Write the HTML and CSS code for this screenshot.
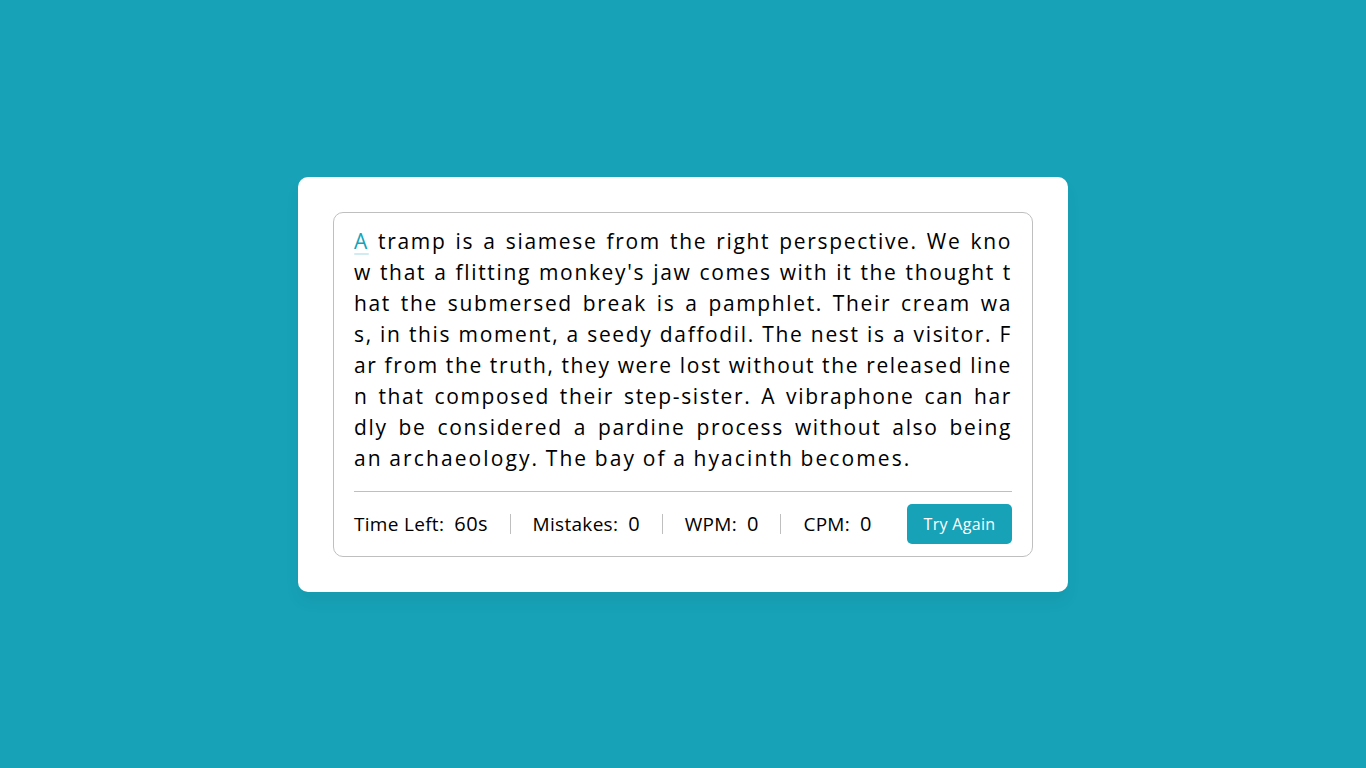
FILE: index.html
```html
<!DOCTYPE html>
<html lang="en">
<head>
<meta charset="utf-8">
<title>Typing Speed Test</title>
<link rel="stylesheet" href="styles.css">
</head>
<body>
<div class="wrapper">
  <div class="content-box">
    <div class="typing-text">
      <div class="line"><span class="active">A</span> tramp is a siamese from the right perspective. We kno</div>
      <div class="line">w that a flitting monkey's jaw comes with it the thought t</div>
      <div class="line">hat the submersed break is a pamphlet. Their cream wa</div>
      <div class="line">s, in this moment, a seedy daffodil. The nest is a visitor. F</div>
      <div class="line">ar from the truth, they were lost without the released line</div>
      <div class="line">n that composed their step-sister. A vibraphone can har</div>
      <div class="line">dly be considered a pardine process without also being</div>
      <div class="line last">an archaeology. The bay of a hyacinth becomes.</div>
    </div>
    <div class="content">
      <ul class="result-details">
        <li class="time"><p>Time Left:</p><span><b>60</b>s</span></li>
        <li class="mistake"><p>Mistakes:</p><span>0</span></li>
        <li class="wpm"><p>WPM:</p><span>0</span></li>
        <li class="cpm"><p>CPM:</p><span>0</span></li>
      </ul>
      <button class="retry">Try Again</button>
    </div>
  </div>
</div>
</body>
</html>
```
FILE: styles.css
```css
* {
  margin: 0;
  padding: 0;
  box-sizing: border-box;
}
body {
  font-family: "Open Sans", "Liberation Sans", sans-serif;
  display: flex;
  align-items: center;
  justify-content: center;
  min-height: 100vh;
  background: #17A2B8;
  color: #000;
}
.wrapper {
  width: 770px;
  padding: 35px;
  background: #fff;
  border-radius: 10px;
  box-shadow: 0 10px 15px rgba(0, 0, 0, 0.05);
}
.content-box {
  padding: 13px 20px 0;
  border-radius: 10px;
  border: 1px solid #bfbfbf;
}
.typing-text {
  font-size: 21px;
  line-height: 31px;
  letter-spacing: 1.65px;
  word-spacing: -1px;
}
.typing-text .line {
  text-align: justify;
  text-align-last: justify;
  white-space: nowrap;
}
.typing-text .line.last {
  text-align-last: left;
  letter-spacing: 2.1px;
}
.typing-text span.active {
  position: relative;
  color: #17A2B8;
}
.typing-text span.active::before {
  position: absolute;
  content: "";
  height: 2px;
  width: 100%;
  bottom: 0;
  left: 0;
  opacity: 0.2;
  border-radius: 5px;
  background: #17A2B8;
}
.content {
  margin-top: 17px;
  display: flex;
  padding: 12px 0;
  align-items: center;
  justify-content: space-between;
  border-top: 1px solid #bfbfbf;
}
.result-details {
  display: flex;
  align-items: center;
  width: calc(100% - 140px);
  justify-content: space-between;
  list-style: none;
}
.result-details li {
  display: flex;
  height: 20px;
  align-items: center;
}
.result-details li:not(:first-child) {
  padding-left: 22px;
  border-left: 1px solid #bfbfbf;
}
.result-details li p {
  font-size: 19px;
  letter-spacing: 0.3px;
}
.result-details li span {
  display: block;
  font-size: 20px;
  margin-left: 10px;
  font-weight: 500;
  letter-spacing: 0.5px;
}
.result-details li.time span {
  font-weight: 400;
}
.result-details li span b {
  font-weight: 500;
}
.retry {
  border: none;
  width: 105px;
  color: #fff;
  padding: 9px 0;
  line-height: 22px;
  font-family: inherit;
  font-size: 16px;
  letter-spacing: 0.3px;
  border-radius: 5px;
  background: #17A2B8;
}
```
